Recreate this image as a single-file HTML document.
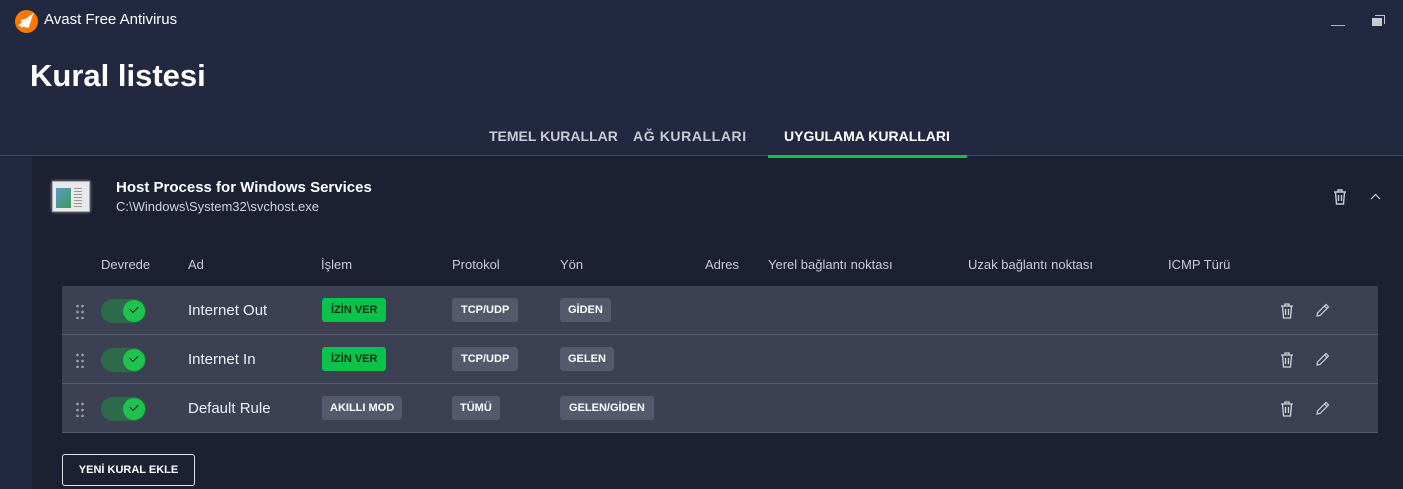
<!DOCTYPE html>
<html><head><meta charset="utf-8"><style>
*{margin:0;padding:0;box-sizing:border-box}
body{width:1403px;height:489px;overflow:hidden;background:#1b2133;font-family:"Liberation Sans",sans-serif;color:#fff;position:relative}
.abs{position:absolute}
.hdr{left:0;top:0;width:1403px;height:156px;background:#222840;border-bottom:1px solid #454b5e}
.strip{left:0;top:157px;width:32px;height:332px;background:#222840}
.tab{top:128px;font-size:14px;font-weight:bold;color:#c8cbd3}
.th{top:257px;font-size:13px;color:#c8ccd4}
.row{left:62px;width:1316px;height:49px;background:#3b4152;border-bottom:1px solid #555b6c}
.row>*{position:absolute}
.tog{left:39px;top:13px;width:45px;height:24px;border-radius:12px;background:#2c6a4a}
.knob{position:absolute;right:1px;top:1px;width:22px;height:22px;border-radius:50%;background:#1ec34e}
.knob::after{content:"";position:absolute;left:7px;top:6px;width:7px;height:4px;border-left:1.5px solid #1b2133;border-bottom:1.5px solid #1b2133;transform:rotate(-45deg)}
.name{left:126px;top:16px;font-size:15px;color:#eef0f4}
.pill{top:12px;height:24px;line-height:24px;padding:0 8px;border-radius:3px;font-size:11px;font-weight:bold;background:#545a6b;color:#fff}
.green{background:#0bc24a;color:#103018}
.dots{left:13px;top:17px;width:10px;height:16px;background:radial-gradient(circle,#9aa0ad 1.2px,transparent 1.5px) 0 0/5px 6px}
</style></head><body>
<div class="abs hdr"></div>
<div class="abs strip"></div>
<svg class="abs" style="left:15px;top:10px" width="23" height="23" viewBox="0 0 23 23"><circle cx="11.5" cy="11.5" r="11.5" fill="#ff7800"/><path d="M5 15 L17 5 L13 17 Z M6 11 L15 8 M6 17 L14 14" stroke="#fff" stroke-width="1.6" fill="#fff"/></svg>
<div class="abs" style="left:44px;top:11px;font-size:15px;color:#fff">Avast Free Antivirus</div>
<div class="abs" style="left:1331px;top:25px;width:14px;height:1px;background:#aab0bc"></div>
<div class="abs" style="left:1375px;top:15px;width:10px;height:9px;border:1px solid #bfc4ce;border-left:none;border-bottom:none"></div>
<div class="abs" style="left:1372px;top:18px;width:10px;height:8px;background:#c8ccd4"></div>
<div class="abs" style="left:30px;top:58px;font-size:31px;font-weight:bold">Kural listesi</div>
<div class="abs tab" style="left:489px">TEMEL KURALLAR</div>
<div class="abs tab" style="left:633px;letter-spacing:0.6px">AĞ KURALLARI</div>
<div class="abs tab" style="left:784px;color:#fff">UYGULAMA KURALLARI</div>
<div class="abs" style="left:768px;top:155px;width:199px;height:3px;background:#0bc24a"></div>
<div class="abs" style="left:52px;top:181px;width:38px;height:31px;background:#e8e8e8;border:1px solid #aaa;box-shadow:0 0 3px #fff8"></div>
<div class="abs" style="left:56px;top:188px;width:15px;height:20px;background:linear-gradient(135deg,#5a9ac8,#3d9a5a)"></div>
<div class="abs" style="left:74px;top:188px;width:8px;height:20px;background:repeating-linear-gradient(#999 0 1px,transparent 1px 3px)"></div>
<div class="abs" style="left:116px;top:179px;font-size:15px;font-weight:bold">Host Process for Windows Services</div>
<div class="abs" style="left:116px;top:199px;font-size:13px;color:#d0d3da">C:\Windows\System32\svchost.exe</div>
<svg class="abs" style="left:1333px;top:189px" width="14" height="16" viewBox="0 0 14 16" fill="none" stroke="#c8ccd4" stroke-width="1.4"><path d="M1 3H13M5 3V1H9V3M2.5 3L3.5 15H10.5L11.5 3M5.5 6V12M8.5 6V12"/></svg>
<svg class="abs" style="left:1370px;top:193px" width="11" height="7" viewBox="0 0 11 7" fill="none" stroke="#c8ccd4" stroke-width="1.2"><path d="M1 6L5.5 1.5L10 6"/></svg>
<div class="abs th" style="left:101px">Devrede</div>
<div class="abs th" style="left:188px">Ad</div>
<div class="abs th" style="left:321px">İşlem</div>
<div class="abs th" style="left:452px">Protokol</div>
<div class="abs th" style="left:560px">Yön</div>
<div class="abs th" style="left:705px">Adres</div>
<div class="abs th" style="left:768px">Yerel bağlantı noktası</div>
<div class="abs th" style="left:968px">Uzak bağlantı noktası</div>
<div class="abs th" style="left:1168px">ICMP Türü</div>

<div class="abs row" style="top:286px"><div class="dots"></div><div class="tog"><div class="knob"></div></div><div class="name">Internet Out</div><div class="pill green" style="left:260px;padding:0 9px">İZİN VER</div><div class="pill" style="left:390px;padding:0 9px">TCP/UDP</div><div class="pill" style="left:498px">GİDEN</div>
<svg style="left:1218px;top:17px" width="14" height="16" viewBox="0 0 14 16" fill="none" stroke="#d0d3da" stroke-width="1.3"><path d="M1 3H13M5 3V1H9V3M2.5 3L3.5 15H10.5L11.5 3M5.5 6V12M8.5 6V12"/></svg>
<svg style="left:1254px;top:17px" width="14" height="14" viewBox="0 0 14 14" fill="none" stroke="#d0d3da" stroke-width="1.2"><path d="M1 13L1.5 10L10 1.5L12.5 4L4 12.5Z M8.5 3L11 5.5"/></svg></div>
<div class="abs row" style="top:335px"><div class="dots"></div><div class="tog"><div class="knob"></div></div><div class="name">Internet In</div><div class="pill green" style="left:260px;padding:0 9px">İZİN VER</div><div class="pill" style="left:390px;padding:0 9px">TCP/UDP</div><div class="pill" style="left:498px">GELEN</div>
<svg style="left:1218px;top:17px" width="14" height="16" viewBox="0 0 14 16" fill="none" stroke="#d0d3da" stroke-width="1.3"><path d="M1 3H13M5 3V1H9V3M2.5 3L3.5 15H10.5L11.5 3M5.5 6V12M8.5 6V12"/></svg>
<svg style="left:1254px;top:17px" width="14" height="14" viewBox="0 0 14 14" fill="none" stroke="#d0d3da" stroke-width="1.2"><path d="M1 13L1.5 10L10 1.5L12.5 4L4 12.5Z M8.5 3L11 5.5"/></svg></div>
<div class="abs row" style="top:384px"><div class="dots"></div><div class="tog"><div class="knob"></div></div><div class="name">Default Rule</div><div class="pill" style="left:260px">AKILLI MOD</div><div class="pill" style="left:390px">TÜMÜ</div><div class="pill" style="left:498px;padding:0 9px">GELEN/GİDEN</div>
<svg style="left:1218px;top:17px" width="14" height="16" viewBox="0 0 14 16" fill="none" stroke="#d0d3da" stroke-width="1.3"><path d="M1 3H13M5 3V1H9V3M2.5 3L3.5 15H10.5L11.5 3M5.5 6V12M8.5 6V12"/></svg>
<svg style="left:1254px;top:17px" width="14" height="14" viewBox="0 0 14 14" fill="none" stroke="#d0d3da" stroke-width="1.2"><path d="M1 13L1.5 10L10 1.5L12.5 4L4 12.5Z M8.5 3L11 5.5"/></svg></div>
<div class="abs" style="left:62px;top:454px;width:133px;height:32px;border:1px solid #e0e2e8;border-radius:3px;font-size:11px;font-weight:bold;text-align:center;line-height:30px">YENİ KURAL EKLE</div>
</body></html>
